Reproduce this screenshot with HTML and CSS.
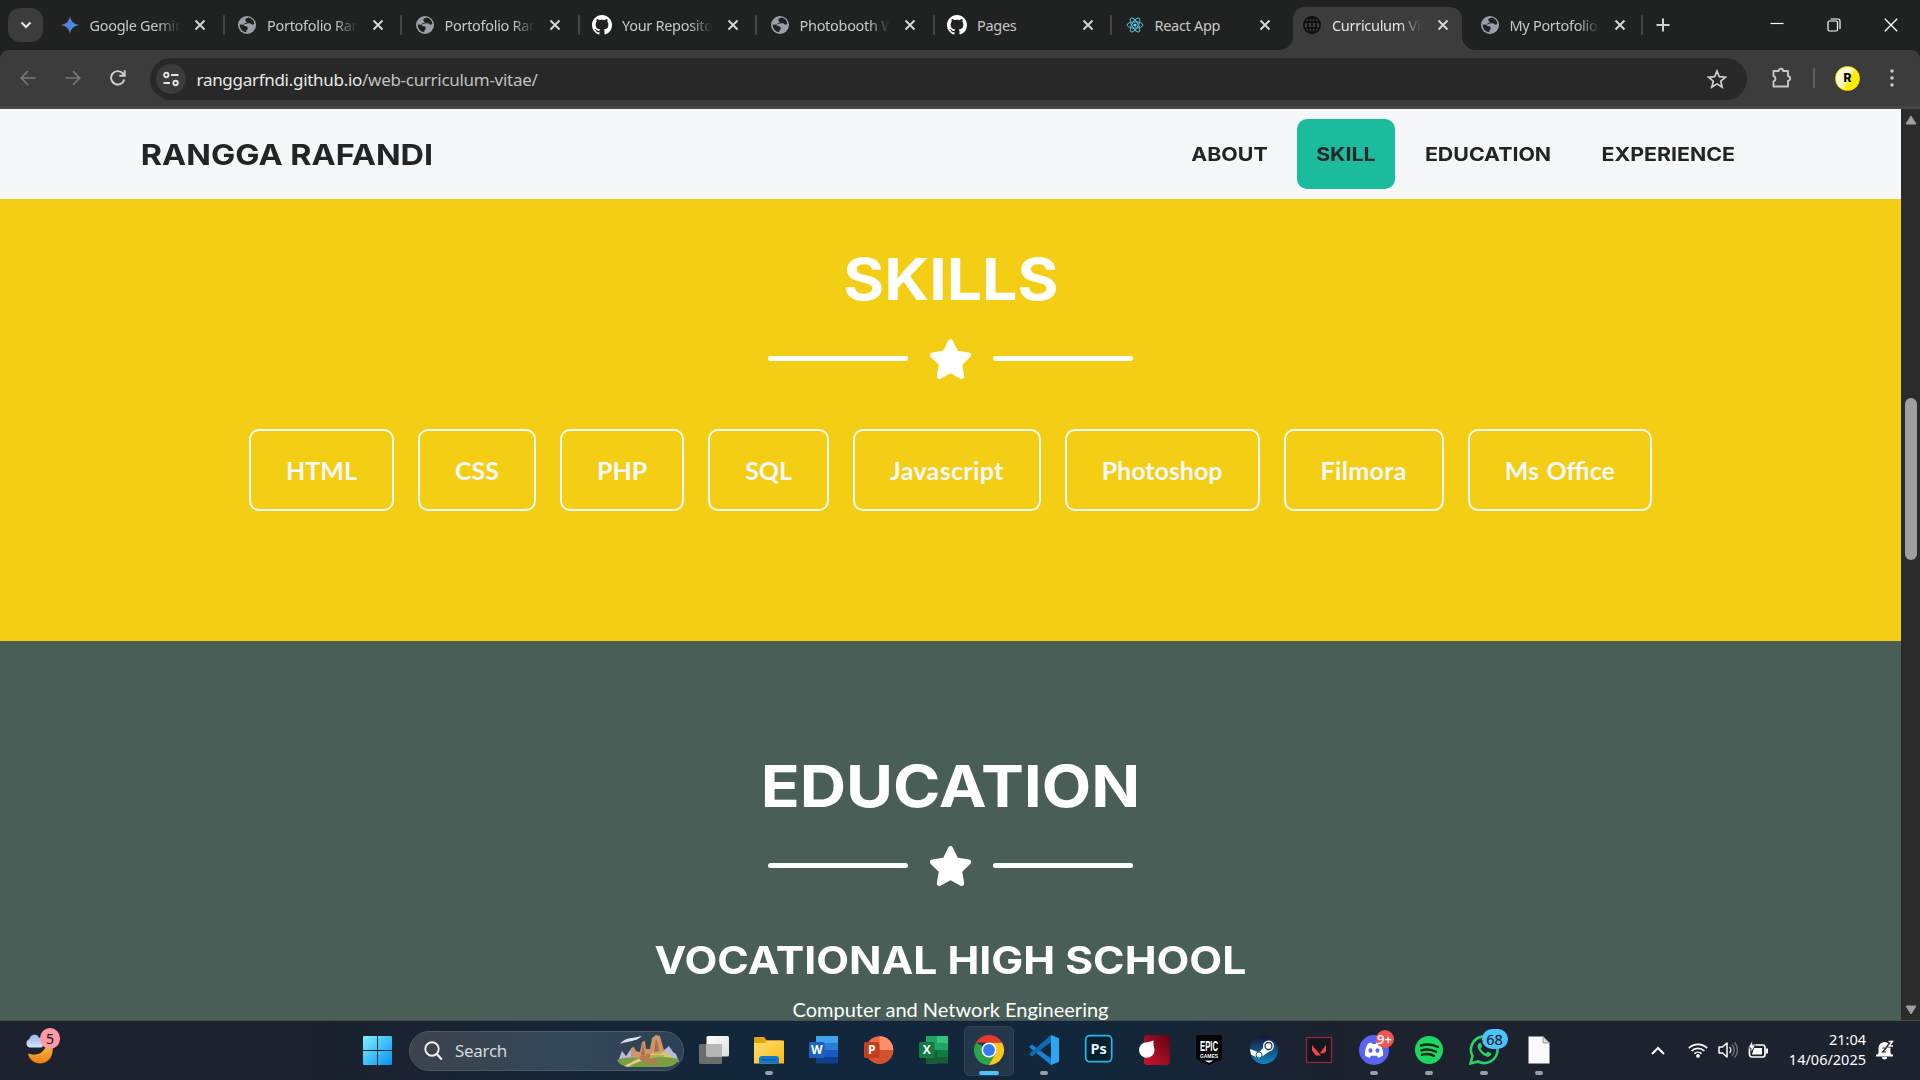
FILE: index.html
```html
<!DOCTYPE html>
<html lang="en">
<head>
<meta charset="utf-8">
<title>Curriculum Vitae</title>
<link rel="stylesheet" href="styles.css">
</head>
<body>
<svg class="defs" aria-hidden="true">
  <defs>
    <linearGradient id="gem" x1="0" x2="1"><stop offset="0" stop-color="#9a6bc0"/><stop offset=".5" stop-color="#4a86e0"/><stop offset="1" stop-color="#39a8e8"/></linearGradient>
    <linearGradient id="win" x1="0" y1="0" x2="1" y2="1"><stop offset="0" stop-color="#7df0fd"/><stop offset="1" stop-color="#0691f5"/></linearGradient>
    <linearGradient id="moon" x1="0" y1="0" x2="0" y2="1"><stop offset="0" stop-color="#f8b53a"/><stop offset="1" stop-color="#ef7d14"/></linearGradient>
    <linearGradient id="cloud" x1="0" y1="0" x2="0" y2="1"><stop offset="0" stop-color="#8fb2ec"/><stop offset="1" stop-color="#dbe6fb"/></linearGradient>
    <linearGradient id="folder" x1="0" y1="0" x2="1" y2="1"><stop offset="0" stop-color="#ffdf74"/><stop offset="1" stop-color="#fbb915"/></linearGradient>
    <linearGradient id="steam" x1="0" y1="0" x2="0" y2="1"><stop offset="0" stop-color="#16163a"/><stop offset="1" stop-color="#1188c4"/></linearGradient>
    <linearGradient id="red" x1="1" y1="0" x2="0" y2="1"><stop offset="0" stop-color="#5c0311"/><stop offset="1" stop-color="#d4152f"/></linearGradient>
    <linearGradient id="view" x1="0" y1="0" x2="1" y2="1"><stop offset="0" stop-color="#ffffff"/><stop offset="1" stop-color="#dcdcdc"/></linearGradient>
  </defs>
  <symbol id="x" viewBox="0 0 12 12"><path d="M1.5 1.5l9 9M10.5 1.5l-9 9" fill="none" stroke="currentColor" stroke-width="1.9"/></symbol>
  <symbol id="earth" viewBox="0 0 18 18"><circle cx="9" cy="9" r="9" fill="#9aa0a9"/><path d="M10.5 1.6c-1.6.6-3.3 1.1-3.3 2.5 0 1.200 1.400 1 1.400 2.200 0 1.300-2.600.8-3 2.300-.2 1 .8 1.700 2.200 1.700 1.700 0 1.900 1 1.900 2 0 1.200-.7 1.600-1.300 2.300l-.2 1.700A7.300 7.300 0 0 1 1.700 8.500l3.600.3L9.600 7.200h2.200c1.200 0 1.500 1.500 2.900 1.500l1.600-.6A7.300 7.300 0 0 0 10.500 1.600z" fill="#202221"/></symbol>
  <symbol id="github" viewBox="0 0 16 16"><path fill="#fff" d="M8 0C3.580 0 0 3.580 0 8c0 3.540 2.290 6.530 5.470 7.590.4.070.55-.17.55-.38 0-.19-.01-.82-.01-1.490-2.010.37-2.530-.49-2.690-.94-.09-.23-.48-.94-.82-1.130-.28-.15-.68-.52-.01-.53.63-.01 1.080.58 1.230.82.72 1.210 1.870.87 2.330.66.07-.52.28-.87.51-1.070-1.780-.2-3.640-.89-3.640-3.950 0-.87.31-1.590.82-2.150-.08-.2-.36-1.020.08-2.120 0 0 .67-.21 2.200.82.64-.18 1.320-.27 2-.27s1.360.09 2 .27c1.530-1.040 2.200-.82 2.200-.82.44 1.100.16 1.920.08 2.120.51.56.82 1.270.82 2.150 0 3.070-1.870 3.750-3.650 3.950.29.25.54.73.54 1.480 0 1.070-.01 1.930-.01 2.200 0 .21.15.46.55.38A8.010 8.010 0 0 0 16 8c0-4.420-3.580-8-8-8z"/></symbol>
  <symbol id="react" viewBox="0 0 20 20"><g fill="none" stroke="#58bfd8" stroke-width="1.100"><ellipse cx="10" cy="10" rx="8.800" ry="3.500"/><ellipse cx="10" cy="10" rx="8.800" ry="3.500" transform="rotate(60 10 10)"/><ellipse cx="10" cy="10" rx="8.800" ry="3.500" transform="rotate(120 10 10)"/></g><circle cx="10" cy="10" r="1.800" fill="#58dcf5"/></symbol>
  <symbol id="globe" viewBox="0 0 18 18"><g fill="none" stroke="#0b0b0b" stroke-width="1.500"><circle cx="9" cy="9" r="8.200"/><ellipse cx="9" cy="9" rx="4" ry="8.200"/><path d="M9 .8v16.400M1.500 6h15M1.500 12h15"/></g></symbol>
  <symbol id="gemini" viewBox="0 0 18 18"><path fill="url(#gem)" d="M9 0c.8 5 3.500 8.200 9 9-5.500.8-8.200 4-9 9-.8-5-3.500-8.200-9-9 5.500-.8 8.200-4 9-9z"/></symbol>
  <symbol id="star" viewBox="0 0 576 512"><path fill="currentColor" d="M316.900 18C311.600 7 300.400 0 288.100 0s-23.400 7-28.800 18L195 150.300 51.400 171.500c-12 1.800-22 10.200-25.700 21.700s-.7 24.200 7.900 32.700L137.800 329 113.200 474.700c-2 12 3 24.200 12.900 31.300s23 8 33.800 2.300l128.300-68.500 128.300 68.500c10.800 5.700 23.900 4.900 33.800-2.300s14.900-19.300 12.900-31.300L438.500 329 542.700 225.900c8.600-8.500 11.700-21.200 7.900-32.700s-13.700-19.900-25.700-21.700L381.200 150.300 316.900 18z"/></symbol>
</svg>

<div class="tabstrip">
  <div class="tab-search"><svg width="12" height="8" viewBox="0 0 12 8"><path d="M1.500 1.500L6 6l4.500-4.500" fill="none" stroke="#e8e8e8" stroke-width="2"/></svg></div>
  <div class="tab"><svg class="fav"><use href="#gemini"/></svg><span class="tab-title fade">Google Gemini</span><svg class="close"><use href="#x"/></svg></div>
  <div class="tab"><svg class="fav"><use href="#earth"/></svg><span class="tab-title fade">Portofolio Ran</span><svg class="close"><use href="#x"/></svg></div>
  <div class="tab"><svg class="fav"><use href="#earth"/></svg><span class="tab-title fade">Portofolio Ran</span><svg class="close"><use href="#x"/></svg></div>
  <div class="tab"><svg class="fav big"><use href="#github"/></svg><span class="tab-title fade">Your Repositori</span><svg class="close"><use href="#x"/></svg></div>
  <div class="tab"><svg class="fav"><use href="#earth"/></svg><span class="tab-title fade">Photobooth W</span><svg class="close"><use href="#x"/></svg></div>
  <div class="tab"><svg class="fav big"><use href="#github"/></svg><span class="tab-title">Pages</span><svg class="close"><use href="#x"/></svg></div>
  <div class="tab plain"><svg class="fav"><use href="#react"/></svg><span class="tab-title">React App</span><svg class="close"><use href="#x"/></svg></div>
  <div class="tab active"><svg class="fav"><use href="#globe"/></svg><span class="tab-title fade">Curriculum Vit</span><svg class="close"><use href="#x"/></svg></div>
  <div class="tab last"><svg class="fav"><use href="#earth"/></svg><span class="tab-title fade">My Portofolio</span><svg class="close"><use href="#x"/></svg></div>
  <svg class="new-tab" viewBox="0 0 14 14"><path d="M7 .5v13M.5 7h13" stroke="#d0d0d0" stroke-width="2"/></svg>
  <div class="window-buttons">
    <svg width="14" height="14" viewBox="0 0 14 14"><path d="M.5 5.500h13" stroke="#fff" stroke-width="1.200"/></svg>
    <svg width="14" height="14" viewBox="0 0 14 14"><g fill="none" stroke="#fff" stroke-width="1.200"><rect x="1" y="3" width="9.500" height="10" rx="1.500"/><path d="M3.500 1h7.500a2 2 0 0 1 2 2v8"/></g></svg>
    <svg width="14" height="14" viewBox="0 0 14 14"><path d="M.8.8l12.400 12.400M13.200.8L.8 13.200" stroke="#fff" stroke-width="1.300"/></svg>
  </div>
</div>

<div class="toolbar">
  <div class="tool dim"><svg width="16" height="16" viewBox="0 0 16 16"><path d="M15.500 8H1.500M8 1.200L1.300 8 8 14.800" fill="none" stroke="currentColor" stroke-width="1.700"/></svg></div>
  <div class="tool dim"><svg width="16" height="16" viewBox="0 0 16 16"><path d="M.5 8h14M8 1.200L14.700 8 8 14.800" fill="none" stroke="currentColor" stroke-width="1.700"/></svg></div>
  <div class="tool"><svg width="16" height="16" viewBox="0 0 16 16"><path d="M14.300 9.500A6.700 6.700 0 1 1 13 3.600l1.300 1.600M14.700.3v5.500H9.300" fill="none" stroke="currentColor" stroke-width="1.900"/></svg></div>
  <div class="omnibox">
    <div class="site-info"><svg width="16" height="16" viewBox="0 0 16 16"><g fill="none" stroke="#e3e3e3" stroke-width="1.900"><circle cx="3.300" cy="4" r="2.200"/><path d="M8 4h7.500M.5 12H7"/><circle cx="12.600" cy="12" r="2.200"/></g></svg></div>
    <span class="url">ranggarfndi.github.io<span class="path">/web-curriculum-vitae/</span></span>
    <svg class="bookmark" viewBox="0 0 20 20"><path d="M10 2l2.300 5.700 6.100.5-4.700 4 1.500 6L10 14.900l-5.200 3.300 1.500-6-4.700-4 6.100-.5z" fill="none" stroke="#cfcfcf" stroke-width="1.700"/></svg>
  </div>
  <div class="ext"><svg width="22" height="22" viewBox="0 0 22 22"><path d="M2.500 4h5.200a2.200 2.200 0 0 1 4.400 0H17v5.300a2.200 2.200 0 0 1 0 4.400V19.500H2.500v-5a2.900 2.900 0 0 0 0-5.500z" fill="none" stroke="#c7c7c7" stroke-width="1.900" stroke-linejoin="round"/></svg></div>
  <div class="tool-sep"></div>
  <div class="avatar">R</div>
  <svg class="menu" viewBox="0 0 4 18"><g fill="#c7c7c7"><circle cx="2" cy="2" r="1.800"/><circle cx="2" cy="9" r="1.800"/><circle cx="2" cy="16" r="1.800"/></g></svg>
</div>

<div class="viewport">
  <div class="page">
    <nav class="navbar">
      <a class="brand"><span class="wide">RANGGA RAFANDI</span></a>
      <div class="links">
        <a class="w-about"><span class="wide">ABOUT</span></a>
        <a class="w-skill current"><span class="wide">SKILL</span></a>
        <a class="w-education"><span class="wide">EDUCATION</span></a>
        <a class="w-experience"><span class="wide">EXPERIENCE</span></a>
      </div>
    </nav>
    <section class="skills">
      <h2><span class="wide">SKILLS</span></h2>
      <div class="divider"><i></i><svg><use href="#star"/></svg><i></i></div>
      <div class="buttons">
        <a>HTML</a><a>CSS</a><a>PHP</a><a>SQL</a><a class="loose">Javascript</a><a>Photoshop</a><a class="loose">Filmora</a><a class="spaced">Ms Office</a>
      </div>
    </section>
    <section class="education">
      <h2><span class="wide">EDUCATION</span></h2>
      <div class="divider"><i></i><svg><use href="#star"/></svg><i></i></div>
      <h3><span class="wide">VOCATIONAL HIGH SCHOOL</span></h3>
      <p>Computer and Network Engineering</p>
    </section>
  </div>
  <div class="scrollbar">
    <svg width="12" height="10" viewBox="0 0 12 10"><path d="M6 1l5 8H1z" fill="#9f9f9f" stroke="#9f9f9f" stroke-linejoin="round"/></svg>
    <div class="thumb"></div>
    <svg width="12" height="10" viewBox="0 0 12 10"><path d="M6 9l5-8H1z" fill="#9f9f9f" stroke="#9f9f9f" stroke-linejoin="round"/></svg>
  </div>
</div>

<div class="taskbar">
  <div class="weather">
    <svg width="30" height="36" viewBox="0 0 30 36"><path d="M27.500 16c1.500 9-3.500 17.500-12 17.500C8.500 33.500 4 29 3 23.500c8 3 15 0 18-7.500z" fill="url(#moon)"/><path d="M4.500 17.500a4.500 4.500 0 0 1 0-8.500 5 5 0 0 1 9.500-1.500c4 0 6 10 2 10z" fill="url(#cloud)"/></svg>
    <span class="badge pink">5</span>
  </div>
  <svg class="start" viewBox="0 0 29 29"><path fill="url(#win)" d="M1 0h13v14H0V1a1 1 0 0 1 1-1zM15 0h13a1 1 0 0 1 1 1v13H15zM0 15h14v14H1a1 1 0 0 1-1-1zM15 15h14v13a1 1 0 0 1-1 1H15z"/></svg>
  <div class="search">
    <svg width="19" height="20" viewBox="0 0 19 20"><circle cx="8" cy="8" r="6.700" fill="none" stroke="#f0f0f0" stroke-width="1.900"/><path d="M12.800 13l5 5.500" stroke="#f0f0f0" stroke-width="2.200"/></svg>
    <span>Search</span>
    <svg class="scene" viewBox="0 0 62 32"><path d="M3 9c3-4 8-6 12-6l10-2c-4 4-7 4-10 5-3 1-8 1-12 3z" fill="#dcdcf2"/><path d="M2 24l3-8 4 5 5-7 6 8 26-6 6-5 4 6 3 2 3 8z" fill="#bdb9dc"/><path d="M14 24V13l3-1 2 4 4 1 2-10 3-1 1 8h4l2-11 4-3 4 1 3 11 3 10z" fill="#cf9468"/><path d="M24 20l2-12 2 12zM37 19L39 3l4 15z" fill="#a96e50"/><path d="M30 22c6-7 20-8 26 1v5H32z" fill="#d8c66c"/><path d="M0 25c12-5 22-1 32-2 10-2 20-1 30 1-2 5-7 8-14 8H10c-4-1-8-3-10-7z" fill="#78a040"/><path d="M7 31c5-2 8-5 17-8l5 2c-8 2-14 4-17 7z" fill="#efc48e"/><path d="M34 21h13M37 18h8" stroke="#9b9a45" stroke-width="1.200"/><g fill="#b97855"><ellipse cx="26" cy="23" rx="3.500" ry="3"/><ellipse cx="32" cy="26" rx="3.500" ry="2.500"/><ellipse cx="38" cy="27" rx="3" ry="2.500"/><ellipse cx="31" cy="21" rx="2.500" ry="2.500"/></g></svg>
  </div>
  <div class="apps">
    <div class="app"><svg viewBox="0 0 32 32"><rect x="1" y="10" width="23" height="20" rx="1.500" fill="#6d6d6d"/><rect x="8.500" y="2" width="22.500" height="20.500" rx="1.500" fill="url(#view)"/><path d="M8.500 10H24v12.500H8.500z" fill="#b5b5b5"/></svg></div>
    <div class="app run"><svg viewBox="0 0 32 32"><path d="M1 4a1 1 0 0 1 1-1h9l3 3.500h14v5H1z" fill="#e3a20d"/><path d="M1 9h11l2-2.500h16a1 1 0 0 1 1 1V29.500H1z" fill="url(#folder)"/><path d="M6 29.500V25a3 3 0 0 1 3-3h14a3 3 0 0 1 3 3v4.500z" fill="#1079cf"/><path d="M9.500 25.800h13" stroke="#0b559c" stroke-width="1.200"/></svg></div>
    <div class="app"><svg viewBox="0 0 32 32"><path d="M8 2h22v7H8z" fill="#41a5ee"/><path d="M8 9h22v7H8z" fill="#2b7cd3"/><path d="M8 16h22v7H8z" fill="#185abd"/><path d="M8 23h22v6.500H8z" fill="#103f91"/><rect x="1" y="8" width="15.500" height="16" rx="1.500" fill="#1d5fc4"/><text class="logo-letter" x="8.700" y="20.200">W</text></svg></div>
    <div class="app"><svg viewBox="0 0 32 32"><circle cx="16.500" cy="16" r="13.800" fill="#ed6c47"/><path d="M16.500 2.200A13.800 13.800 0 0 1 30.300 16H16.500z" fill="#ff8f6b"/><path d="M2.700 16h27.600a13.800 13.800 0 0 1-27.600 0z" fill="#d35230"/><rect x="1" y="8" width="15.500" height="16" rx="1.500" fill="#c43e1c"/><text class="logo-letter" x="8.700" y="20.200">P</text></svg></div>
    <div class="app"><svg viewBox="0 0 32 32"><path d="M8 2h11v27.500H8z" fill="#21a366"/><path d="M19 2h11v7H19z" fill="#33c481"/><path d="M19 9h11v7H19z" fill="#21a366"/><path d="M8 16h11v7H8z" fill="#185c37"/><path d="M19 16h11v7H19z" fill="#107c41"/><path d="M8 23h22v6.500H8z" fill="#185c37"/><rect x="1" y="8" width="15.500" height="16" rx="1.500" fill="#107c41"/><text class="logo-letter" x="8.700" y="20.200">X</text></svg></div>
    <div class="app focused"><svg viewBox="0 0 32 32"><path d="M16 16V8.500h13A15 15 0 0 1 16 31z" fill="#fdc520"/><path d="M16 16l6.500 3.700L16 31A15 15 0 0 1 3 8.500z" fill="#2ba24c"/><path d="M3 8.500a15 15 0 0 1 26 0H16z" fill="#e8392d"/><circle cx="16" cy="16" r="7.500" fill="#fff"/><circle cx="16" cy="16" r="5.900" fill="#2f7bf0"/></svg></div>
    <div class="app run"><svg viewBox="0 0 32 32"><path d="M23 1l8 3.500v23L23 31 1 13l3-2.500L23 24.500z" fill="#1a83cf"/><path d="M23 1v7L4 22.500 1 20z" fill="#0c6db5"/><path d="M23 1l8 3.500v23L23 31z" fill="#2aa6f3"/></svg></div>
    <div class="app"><svg viewBox="0 0 32 32"><rect x="2.700" y="1.700" width="26" height="26" rx="4" fill="#071e2b" stroke="#2bb4ee" stroke-width="1.700"/><text class="ps" x="15.600" y="19.500">Ps</text></svg></div>
    <div class="app"><svg viewBox="0 0 32 32"><rect x="6" y="1" width="26" height="30" rx="3" fill="url(#red)"/><circle cx="8.800" cy="16" r="7.800" fill="#fff"/><path d="M9 8.500l6.500-2v9z" fill="#fff"/></svg></div>
    <div class="app"><svg viewBox="0 0 32 32"><path d="M5 1h22a2 2 0 0 1 2 2v22l-13 6-13-6V3a2 2 0 0 1 2-2z" fill="#050505"/><text class="epic" x="16" y="16.500" textLength="18" lengthAdjust="spacingAndGlyphs">EPIC</text><text class="games" x="16" y="23.500" textLength="18" lengthAdjust="spacingAndGlyphs">GAMES</text><path d="M11.500 26.500h9L16 28.700z" fill="#fff"/></svg></div>
    <div class="app"><svg viewBox="0 0 32 32"><circle cx="16" cy="16" r="14" fill="url(#steam)"/><path d="M2 15l9 3.500 6-7 5 5.500-8 5.500-3 2-8-4z" fill="#fff"/><circle cx="20.500" cy="12" r="5.500" fill="#fff"/><circle cx="20.500" cy="12" r="3.500" fill="#fff" stroke="#1d3a62" stroke-width="1.300"/><circle cx="11" cy="21" r="3" fill="#fff" stroke="#1c5f92"/></svg></div>
    <div class="app"><svg viewBox="0 0 32 32"><rect x="3.500" y="3.500" width="25" height="25" fill="#151520" stroke="#8e2c3a" stroke-width="1.300"/><path d="M9 11l9 10.500h-5L9 16.500zM23 11v6l-1.800 2.200h-4.400z" fill="#f2464f"/></svg></div>
    <div class="app run"><svg viewBox="0 0 32 32"><circle cx="16" cy="16" r="15" fill="#5865f2"/><path d="M10 9.500l3.500-1 .8 1.500h3.400l.8-1.500 3.500 1c2.500 4 3.500 8 3 12-2 1.500-3.300 2-4.800 2.300l-1.200-2h-6l-1.200 2c-1.500-.3-2.800-.8-4.800-2.300-.4-4 .5-8 3-12z" fill="#fff"/><ellipse cx="12.500" cy="16.500" rx="2" ry="2.200" fill="#5865f2"/><ellipse cx="19.500" cy="16.500" rx="2" ry="2.200" fill="#5865f2"/></svg><span class="badge red">9+</span></div>
    <div class="app run"><svg viewBox="0 0 32 32"><circle cx="16" cy="16" r="14" fill="#1ed760"/><path d="M8 11.500c6-1.800 12-1.200 17 1.500M8.500 16.300c5-1.500 10-1 14.500 1.500M9 20.700c4.500-1.200 8.500-.8 12 1.200" fill="none" stroke="#10251a" stroke-width="2.400" stroke-linecap="round"/></svg></div>
    <div class="app run"><svg viewBox="0 0 32 32"><path d="M2.500 29.500l2-7.500A13.300 13.300 0 1 1 10 27.500z" fill="none" stroke="#25d366" stroke-width="2.600"/><path d="M11.500 9c-2 1-2.500 3-1.500 5.200 2 4.300 4.500 6.800 8.500 8.300 2.500.8 4.500-.5 4.800-3l-3.600-2-1.700 2c-2.700-1.200-4.200-2.800-5.400-5.300l1.500-1.700-1.400-3.400z" fill="#25d366"/></svg><span class="badge blue">68</span></div>
    <div class="app run"><svg viewBox="0 0 32 32"><path d="M5.500 2.500H20l6.500 6.500v20.500h-21z" fill="#fafafa"/><path d="M20 2.500V9h6.500z" fill="#ddd" stroke="#888" stroke-width=".8"/></svg></div>
  </div>
  <div class="tray">
    <svg width="14" height="9" viewBox="0 0 14 9"><path d="M1 8l6-6 6 6" fill="none" stroke="#fff" stroke-width="2"/></svg>
    <svg width="20" height="16" viewBox="0 0 20 16"><g fill="none" stroke="#fff" stroke-width="1.700"><path d="M.8 6.200a13 13 0 0 1 18.400 0M3.600 9a9.200 9.200 0 0 1 12.800 0M6.400 11.700a5.200 5.200 0 0 1 7.200 0"/></g><circle cx="10" cy="13.900" r="1.900" fill="#fff"/></svg>
    <svg width="20" height="18" viewBox="0 0 20 18"><path d="M1 6h3.500L9 2v14l-4.500-4H1z" fill="none" stroke="#fff" stroke-width="1.500" stroke-linejoin="round"/><path d="M11.500 6a4.500 4.500 0 0 1 0 6" fill="none" stroke="#ddd" stroke-width="1.400"/><path d="M14 3.500a8 8 0 0 1 0 11M16.500 1.500a11 11 0 0 1 0 15" fill="none" stroke="#69707a" stroke-width="1.400"/></svg>
    <svg width="21" height="18" viewBox="0 0 21 18"><rect x="1.500" y="4" width="15.500" height="12" rx="2.500" fill="none" stroke="#fff" stroke-width="1.700"/><path d="M6 7h8v6.500H4z" fill="#fff"/><path d="M18 7.500h2v5h-2z" fill="#fff"/><path d="M4-.2L.5 7H3v4.500L7.500 4H4.800z" fill="#fff" stroke="#1c222e" stroke-width=".7"/></svg>
    <div class="clock">21:04<br>14/06/2025</div>
    <svg width="18" height="20" viewBox="0 0 18 20"><path d="M1 15.500L2.500 13V8a6 6 0 0 1 12 0v5l1.500 2.500zM6 17h5a2.500 2.500 0 0 1-5 0z" fill="#fff"/><path d="M0 14.500h17v2H0z" fill="#fff"/><g fill="none" stroke="#1c222e"><path d="M6.500 8H10l-3.500 4H10" stroke-width="1.200"/><path d="M12 1.500h4l-3.500 4.500h4" stroke-width="3.200"/></g><path d="M12.500 1.500h4L13 6h4" fill="none" stroke="#fff" stroke-width="1.400"/></svg>
  </div>
</div>
</body>
</html>
```

FILE: styles.css
```css
* { box-sizing: border-box; }
body { margin: 0; width: 1920px; height: 1080px; overflow: hidden; display: flex; flex-direction: column; background: #202221; font-family: "Noto Sans", sans-serif; }
svg { display: block; flex: none; }
.defs { position: absolute; width: 0; height: 0; }

/* Tab strip */
.tabstrip { height: 50px; flex: none; display: flex; align-items: center; background: #202221; padding-left: 8px; color: #c7c7c7; }
.tab-search { width: 35px; height: 34px; border-radius: 12px; background: #3c3c3c; display: grid; place-items: center; margin-right: 4px; }
.tab { width: 177.5px; height: 43px; margin-top: 7px; display: flex; align-items: center; padding: 0 0 7px 13.500px; position: relative; flex: none; }
.tab::after { content: ""; position: absolute; right: 0; top: 8px; width: 2px; height: 20px; border-radius: 1px; background: #454746; }
.tab.plain::after, .tab.active::after { display: none; }
.fav { width: 18px; height: 18px; margin-right: 11px; }
.fav.big { width: 20px; height: 20px; margin: 0 10px 0 -1px; }
.tab-title { width: 90px; height: 24px; line-height: 24px; font-size: 14.5px; letter-spacing: -.3px; white-space: nowrap; overflow: hidden; }
.fade { -webkit-mask-image: linear-gradient(90deg, #000 68px, transparent 90px); mask-image: linear-gradient(90deg, #000 68px, transparent 90px); }
.close { width: 12px; height: 12px; margin-left: 14.500px; color: #d8d8d8; }
.tab.active { width: 169px; margin-left: 3.500px; margin-right: 5px; padding-left: 10px; background: #3c3c3c; border-radius: 12px 12px 0 0; color: #e3e3e3; }
.tab.active::before, .tab.active::after { content: ""; display: block; position: absolute; top: auto; bottom: 0; width: 13px; height: 13px; border-radius: 0; }
.tab.active::before { left: -13px; background: radial-gradient(circle at 0 0, transparent 12.500px, #3c3c3c 13px); }
.tab.active::after { right: -13px; background: radial-gradient(circle at 100% 0, transparent 12.500px, #3c3c3c 13px); }
.tab.last { width: 176px; }
.new-tab { width: 14px; height: 14px; margin-left: 13px; }
.window-buttons { margin-left: auto; display: flex; gap: 43px; padding-right: 22px; }

/* Toolbar */
.toolbar { height: 59px; flex: none; display: flex; align-items: center; padding: 0 0 3px 5px; background: linear-gradient(#3c3c3c 56px, #484848 57px); border-radius: 9px 9px 0 0; }
.tool { width: 45px; display: grid; place-items: center; color: #d0d0d0; }
.tool.dim { color: #777; }
.omnibox { width: 1597px; height: 42px; margin: 2px 0 0 10px; border-radius: 21px; background: #282828; display: flex; align-items: center; padding: 0 20px 0 6px; }
.site-info { width: 30px; height: 30px; border-radius: 50%; background: #3c3c3c; display: grid; place-items: center; }
.url { margin-left: 10.500px; font-size: 17px; letter-spacing: -.29px; color: #e8e8e8; }
.path { color: #c0c0c0; }
.bookmark { width: 20px; height: 20px; margin-left: auto; }
.ext { width: 66px; display: grid; place-items: center; padding-left: 3px; }
.tool-sep { width: 2px; height: 20px; background: #5f5f5f; }
.avatar { width: 25px; height: 25px; margin-left: 20px; border-radius: 50%; border: 1.500px solid #f4e800; background: linear-gradient(120deg, #fffbd0 46%, #fdf000 60%); color: #000; font: 800 12px/22px Inter, sans-serif; text-align: center; }
.menu { width: 4px; height: 18px; margin-left: 30px; }

/* Web page */
.viewport { height: 911px; flex: none; display: flex; overflow: hidden; }
.page { width: 1901px; background: #495e57; color: #fff; font-family: Lato, sans-serif; }
.wide { display: inline-block; font-family: Inter, sans-serif; font-weight: 700; transform: scaleX(1.107); white-space: nowrap; }
.brand .wide { transform: scaleX(1.116); }
.skills .wide { transform: scaleX(1.078); }
.navbar { height: 90px; background: #f5f7f9; color: #212529; display: flex; align-items: center; justify-content: space-between; padding: 0 146px 0 141px; }
.brand { width: 291px; text-align: center; font-size: 29px; line-height: 40px; }
.links { display: flex; gap: 10px; }
.links a { height: 70px; display: flex; align-items: center; justify-content: center; border-radius: 10px; font-size: 19.300px; }
.w-about { width: 116px; }
.w-skill { width: 98px; }
.w-education { width: 167px; }
.w-experience { width: 173px; }
.current { background: #1abc9c; }
h2, h3, p { margin: 0; text-align: center; }
h2 { font-size: 58px; line-height: 72px; }
.skills { height: 442px; background: #f4ce14; padding-top: 43px; }
.divider { height: 45px; display: flex; align-items: center; justify-content: center; gap: 20px; margin-top: 21px; }
.divider i { width: 140px; height: 5px; border-radius: 3px; background: #fff; }
.divider svg { width: 45px; height: 40px; }
.buttons { display: flex; justify-content: center; gap: 24px; margin-top: 48px; }
.buttons a { height: 82px; border: 2px solid #f8f9fa; border-radius: 10px; padding: 0 35px; font-weight: 700; font-size: 25px; line-height: 78px; color: #f8f9fa; white-space: nowrap; }
.buttons .loose { letter-spacing: .33px; }
.buttons .spaced { word-spacing: 1.500px; }
.education { height: 379px; padding-top: 108px; }
h3 { margin-top: 47px; font-size: 38.500px; line-height: 48px; }
.education p { font-size: 20px; line-height: 30px; margin-top: 10px; }
.scrollbar { width: 19px; background: #2b2b2b; display: flex; flex-direction: column; align-items: center; justify-content: space-between; padding: 6px 0 5px; }
.thumb { width: 12px; height: 162px; border-radius: 6px; background: #9f9f9f; margin-bottom: 173px; }

/* Taskbar */
.taskbar { height: 60px; flex: none; border-top: 1px solid #454d51; display: flex; align-items: center; padding-left: 25px; background: linear-gradient(90deg, #1c222e 300px, #12273b 760px, #12273b 1100px, #1c222e 1350px); color: #fff; }
.weather { width: 38px; height: 48px; position: relative; }
.weather svg { margin-top: 3px; }
.badge { position: absolute; border-radius: 12px; text-align: center; color: #111; }
.pink { left: 15px; top: 1px; width: 20px; height: 21px; background: #ff99a4; font-size: 14px; line-height: 21px; }
.start { width: 29px; height: 29px; margin-left: 300px; }
.search { width: 275px; height: 40px; margin-left: 17px; border-radius: 20px; background: linear-gradient(90deg, #3c424e, #334858 60%, #2b4156); border: 1px solid #4d5965; display: flex; align-items: center; padding: 0 4px 0 14px; color: #d5d9dd; font-size: 17px; letter-spacing: -.3px; }
.search span { margin-left: 12px; }
.scene { width: 62px; height: 32px; margin-left: auto; }
.apps { display: flex; margin-left: 2.500px; }
.app { width: 55px; height: 50px; padding: 8px 0 0 11.500px; position: relative; }
.app svg { width: 32px; height: 32px; }
.app::after { content: ""; position: absolute; left: 23.500px; bottom: 1px; width: 8px; height: 4px; border-radius: 2px; }
.run::after { background: #9a9fa6; }
.focused { width: 50px; margin: 0 2.500px; padding-left: 9px; border-radius: 6px; background: #24374a; box-shadow: inset 0 0 0 1px #304253; }
.focused::after { left: 15px; width: 20px; background: #4cc2ff; }
.logo-letter { font: 700 12px "Open Sans", sans-serif; fill: #fff; text-anchor: middle; }
.ps { font: 700 14.500px "Open Sans", sans-serif; fill: #dff4ff; text-anchor: middle; }
.epic { font: 700 15px "Liberation Sans", sans-serif; fill: #fff; text-anchor: middle; }
.games { font: 700 5.500px "Liberation Sans", sans-serif; fill: #fff; text-anchor: middle; }
.red { left: 29px; top: 4px; width: 18px; height: 18px; background: #f05454; color: #fff; font: 600 13px/18px "Open Sans", sans-serif; }
.blue { left: 25px; top: 3px; width: 26px; height: 20px; background: #4cc2ff; font-size: 14.500px; line-height: 20px; }
.tray { display: flex; align-items: center; margin-left: 84.500px; padding-bottom: 1px; }
.tray svg:nth-child(2) { margin-left: 23px; }
.tray svg:nth-child(3) { margin-left: 10px; }
.tray svg:nth-child(4) { margin-left: 10px; }
.clock { width: 97px; text-align: right; font-size: 14.500px; line-height: 20px; letter-spacing: 0; padding-bottom: 3px; }
.tray svg:last-child { margin-left: 10px; }
```
